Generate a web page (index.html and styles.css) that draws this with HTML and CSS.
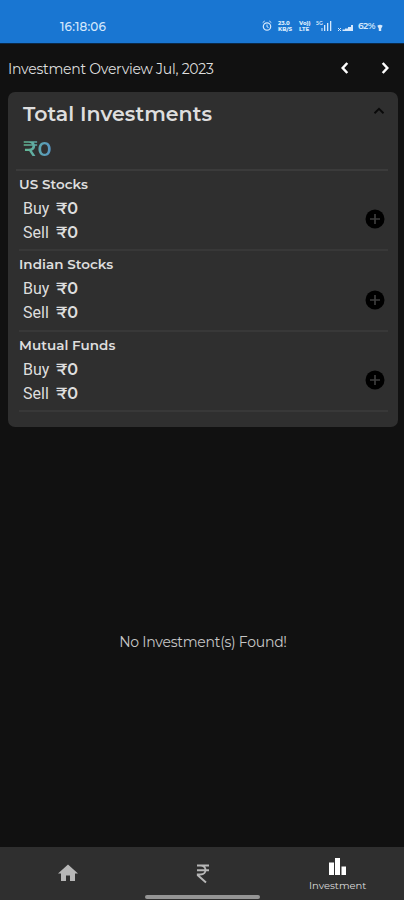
FILE: index.html
```html
<!DOCTYPE html>
<html lang="en">
<head>
<meta charset="utf-8">
<title>Investment Overview</title>
<link rel="stylesheet" href="styles.css">
</head>
<body>
<div class="app">
  <header class="status">
    <span class="clock">16:18:06</span>
    <div class="indicators">
      <svg class="alarm" width="10" height="12" viewBox="0 0 10 12" fill="none" stroke="currentColor"><circle cx="5" cy="6.5" r="3.7" stroke-width="1.2"/><path d="M5 4.5v2.3l1.5.7M.7 2.6 2.7 1M9.3 2.6 7.3 1"/></svg>
      <span class="tiny rate"><b>23.0</b><b>KB/S</b></span>
      <span class="tiny volte"><b>Vo))</b><b>LTE</b></span>
      <svg class="net" width="17" height="12" viewBox="0 0 17 12" fill="currentColor"><text x="0" y="5" class="net-label">5G</text><path d="M8 5h1.300v6H8zM11 3h1.300v8H11zM14 1h1.300v10H14zM5.500 8h1v3h-1z"/></svg>
      <svg class="signal" width="16" height="12" viewBox="0 0 16 12" fill="currentColor"><path d="M0 8h1v1h1V8h1v1H2v1h1v1H2v-1H1v1H0v-1h1V9H0zM4.500 9.500H7V11H4.500zM7 8.500h3V11H7zM10 7h3v4h-3zM13 5H15v6h-2z"/></svg>
      <span class="battery">62%</span>
      <svg class="drop" width="6" height="9" viewBox="0 0 6 9" fill="currentColor"><path d="M.3 2.700Q3 1 5.700 2.700L4.200 5.500V8H1.800V5.500z"/></svg>
    </div>
  </header>
  <div class="overview">
    <h1>Investment Overview Jul, 2023</h1>
    <svg class="prev" width="10" height="14" viewBox="0 0 10 14"><path d="M7.300 2 2.700 7l4.600 5"/></svg>
    <svg class="next" width="10" height="14" viewBox="0 0 10 14"><path d="M2.700 2 7.300 7l-4.600 5"/></svg>
  </div>
  <main>
    <section class="card">
      <div class="total">
        <h2>Total Investments</h2>
        <svg class="collapse" width="12" height="8" viewBox="0 0 12 8"><path d="M1.500 6.200 6 1.800l4.500 4.400"/></svg>
        <div class="sum">₹0</div>
      </div>
      <div class="group">
        <div class="figures"><h3>US Stocks</h3>
          <div class="row"><span>Buy</span><b>₹0</b></div>
          <div class="row"><span>Sell</span><b>₹0</b></div></div>
        <svg class="add" width="20" height="20" viewBox="0 0 20 20"><circle cx="10" cy="10" r="9.500"/><path d="M10 5v10M5 10h10"/></svg>
      </div>
      <div class="group">
        <div class="figures"><h3>Indian Stocks</h3>
          <div class="row"><span>Buy</span><b>₹0</b></div>
          <div class="row"><span>Sell</span><b>₹0</b></div></div>
        <svg class="add" width="20" height="20" viewBox="0 0 20 20"><circle cx="10" cy="10" r="9.500"/><path d="M10 5v10M5 10h10"/></svg>
      </div>
      <div class="group">
        <div class="figures"><h3>Mutual Funds</h3>
          <div class="row"><span>Buy</span><b>₹0</b></div>
          <div class="row"><span>Sell</span><b>₹0</b></div></div>
        <svg class="add" width="20" height="20" viewBox="0 0 20 20"><circle cx="10" cy="10" r="9.500"/><path d="M10 5v10M5 10h10"/></svg>
      </div>
    </section>
    <p class="empty">No Investment(s) Found!</p>
  </main>
  <nav>
    <div class="tab"><svg width="20" height="18" viewBox="0 0 20 18" fill="currentColor"><path d="M10 .500 0 9.500h3V17h5v-5.500h4V17h5V9.500h3z"/></svg></div>
    <div class="tab"><svg class="rupee" width="14" height="20" viewBox="0 0 14 20" fill="none" stroke="currentColor" stroke-width="1.900"><path d="M1 1.500h12M1 6.200h12M1 1.500h3.500c6.700 0 6.700 9 0 9H1.800v.700L10 18.500"/></svg></div>
    <div class="tab active"><svg width="17" height="17" viewBox="0 0 17 17" fill="currentColor"><path d="M0 4.500h5V17H0zM6 0h5v17H6zM12.500 8.500H17V17h-4.500z"/></svg><span>Investment</span></div>
    <div class="gesture"></div>
  </nav>
</div>
</body>
</html>
```
FILE: styles.css
```css
* { box-sizing: border-box; }
body { margin: 0; background: #111; color: #dedede; font-family: Montserrat, Inter, sans-serif; }
h1, h2, h3, p { margin: 0; white-space: nowrap; }
.app { width: 404px; height: 900px; display: flex; flex-direction: column; overflow: hidden; }
.status { height: 44px; flex: none; background: #1976d2; border-bottom: 1px solid #0b2947; color: #d5e8fc; display: flex; justify-content: space-between; padding: 20px 21px 0 60px; }
.clock { font-size: 12px; line-height: 14px; font-weight: 500; letter-spacing: .15px; }
.indicators { display: flex; height: 12px; align-items: flex-end; }
.tiny { display: flex; flex-direction: column; font-size: 5.500px; line-height: 6px; }
.tiny b { height: 6px; line-height: 6px; font-weight: 800; }
.rate { width: 16px; margin-left: 6px; }
.volte { width: 13px; margin-left: 5px; }
.net { margin-left: 4px; }
.net-label { font-size: 5px; font-weight: 600; }
.signal { margin-left: 5px; }
.battery { font-size: 9px; line-height: 12px; font-weight: 600; margin-left: 4px; letter-spacing: -.6px; width: 18px; }
.drop { margin-left: 1px; }
.overview { height: 48px; flex: none; display: flex; align-items: center; padding: 0 14px 0 8px; }
h1 { font-size: 14px; line-height: 18px; padding-top: 1px; font-weight: 400; flex: 1; letter-spacing: -.25px; }
.overview svg { fill: none; stroke: #fff; stroke-width: 2.500; }
.next { margin-left: 30px; }
main { flex: 1; display: flex; flex-direction: column; padding: 0 6px 0 8px; }
.card { height: 335px; flex: none; background: #2f2f2f; border-radius: 7px; padding: 0 10px 0 8px; }
.total { height: 78.500px; border-bottom: 2px solid #3b3b3b; padding: 8px 3px 0 7px; display: grid; grid-template-columns: 1fr auto; grid-template-rows: 28px 40px; }
h2 { font-size: 20.500px; line-height: 28px; font-weight: 600; letter-spacing: .04px; }
.collapse { align-self: start; margin-top: 7px; fill: none; stroke: #090909; stroke-width: 1.900; }
.sum { width: 29px; font-size: 21px; line-height: 42px; font-weight: 600; letter-spacing: -.3px; background: linear-gradient(90deg, #65bb91, #5794c4); background-clip: text; color: transparent; }
.group { height: 80.600px; margin: 0 0 0 3px; border-bottom: 2px solid #383838; display: flex; justify-content: space-between; padding: 4px 3px 0 0; }
h3 { font-size: 13.500px; line-height: 18px; height: 20px; font-weight: 600; letter-spacing: .04px; }
.row { display: flex; height: 24.300px; padding-left: 4px; font: 400 16px/28px Roboto, sans-serif; }
.row span { width: 33px; }
.row b { font: 600 16px/28px Montserrat, Inter, sans-serif; }
.add { margin-top: 34.500px; }
.add circle { fill: #000; }
.add path { stroke: #3c3c3c; stroke-width: 1.700; }
.empty { margin-top: 205px; text-align: center; font-size: 14px; line-height: 20px; letter-spacing: -.25px; color: #c7c7c7; }
nav { height: 53px; flex: none; background: #2f2f2f; display: grid; grid-template-columns: repeat(3, 1fr); position: relative; color: #b7b7b7; }
.tab { display: flex; flex-direction: column; align-items: center; padding: 17px 0 0 2px; }
.tab:first-child { padding-left: 1px; }
.active { color: #fff; padding-top: 11px; }
.active span { color: #ddd; font-size: 10px; line-height: 14px; margin-top: 4px; }
.gesture { position: absolute; bottom: 1px; left: 145px; width: 115px; height: 4px; border-radius: 2px; background: #959595; }
```
